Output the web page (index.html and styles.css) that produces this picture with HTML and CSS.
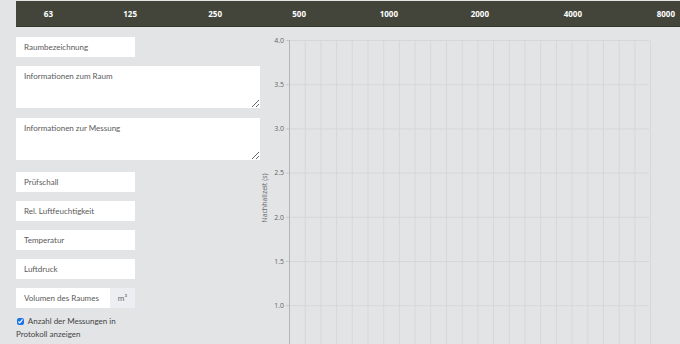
FILE: index.html
```html
<!DOCTYPE html>
<html lang="de">
<head>
    <meta charset="UTF-8">
    <meta name="viewport" content="width=device-width, initial-scale=1.0">
    <title>Nachhallzeit</title>
    <link rel="stylesheet" href="styles.css">
</head>
<body>
    <div class="band-bar">
        <span>63</span>
        <span>125</span>
        <span>250</span>
        <span>500</span>
        <span>1000</span>
        <span>2000</span>
        <span>4000</span>
        <span>8000</span>
    </div>

    <div class="main">
        <form class="room-form">
            <input class="field field-short" type="text" placeholder="Raumbezeichnung">
            <textarea class="field field-area" placeholder="Informationen zum Raum"></textarea>
            <textarea class="field field-area" placeholder="Informationen zur Messung"></textarea>
            <input class="field field-short" type="text" placeholder="Prüfschall">
            <input class="field field-short" type="text" placeholder="Rel. Luftfeuchtigkeit">
            <input class="field field-short" type="text" placeholder="Temperatur">
            <input class="field field-short" type="text" placeholder="Luftdruck">
            <div class="input-group">
                <input class="field group-input" type="text" placeholder="Volumen des Raumes">
                <span class="addon">m³</span>
            </div>
            <label class="check">
                <input type="checkbox" checked>
                Anzahl der Messungen in Protokoll anzeigen
            </label>
        </form>

        <div class="chart">
            <svg width="420" height="317" viewBox="0 0 420 317">
                <defs>
                    <pattern id="vgrid" x="29" y="0" width="15.7" height="10" patternUnits="userSpaceOnUse">
                        <line x1="0.5" y1="0" x2="0.5" y2="10" stroke="#d6d7d9" stroke-width="1"/>
                    </pattern>
                    <pattern id="hgrid" x="0" y="13" width="10" height="44.2" patternUnits="userSpaceOnUse">
                        <line x1="0" y1="0.5" x2="10" y2="0.5" stroke="#d6d7d9" stroke-width="1"/>
                    </pattern>
                </defs>
                <rect x="29" y="13" width="362" height="304" fill="url(#vgrid)"/>
                <rect x="29" y="13" width="360" height="304" fill="url(#hgrid)"/>
                <line x1="29.5" y1="13" x2="29.5" y2="317" stroke="#b4b5b7"/>
                <g class="ticks">
                    <line x1="26" y1="13.5" x2="29" y2="13.5"/>
                    <line x1="26" y1="57.7" x2="29" y2="57.7"/>
                    <line x1="26" y1="101.9" x2="29" y2="101.9"/>
                    <line x1="26" y1="146.1" x2="29" y2="146.1"/>
                    <line x1="26" y1="190.3" x2="29" y2="190.3"/>
                    <line x1="26" y1="234.5" x2="29" y2="234.5"/>
                    <line x1="26" y1="278.7" x2="29" y2="278.7"/>
                </g>
                <g class="tick-labels">
                    <text x="24" y="16">4.0</text>
                    <text x="24" y="60">3.5</text>
                    <text x="24" y="104">3.0</text>
                    <text x="24" y="148">2.5</text>
                    <text x="24" y="193">2.0</text>
                    <text x="24" y="237">1.5</text>
                    <text x="24" y="281">1.0</text>
                </g>
                <text class="axis-title" transform="translate(7 171) rotate(-90)">Nachhallzeit (s)</text>
            </svg>
        </div>
    </div>
</body>
</html>
```

FILE: styles.css
```css
* {
    margin: 0;
    padding: 0;
    box-sizing: border-box;
}

body {
    font-family: 'Lato', 'Open Sans', sans-serif;
    background: #e3e4e6;
    overflow: hidden;
    color: #555;
    width: 680px;
    height: 344px;
}

.band-bar {
    margin: 1px 0 0 16px;
    height: 26px;
    background: #43453b;
    border-bottom: 1px solid #35372f;
    display: grid;
    grid-template-columns: 37px 84px 85px 84px 92px 91px 93px 93px;
    align-items: center;
}

.band-bar span {
    font-family: 'Open Sans', sans-serif;
    text-align: right;
    color: #fff;
    font-size: 8px;
    font-weight: bold;
}

.main {
    display: flex;
}

.room-form {
    width: 260px;
    flex-shrink: 0;
    padding: 10px 0 0 16px;
    display: flex;
    flex-direction: column;
    align-items: flex-start;
    gap: 9px;
}

.field {
    font-family: inherit;
    font-size: 8px;
    color: #555;
    background: #fff;
    border: none;
    outline: none;
    padding: 0 8px;
    height: 20px;
}

.field::placeholder {
    color: #5a5a5a;
}

.field-short {
    width: 119px;
}

.field-area {
    width: 244px;
    height: 42px;
    padding-top: 5px;
    margin-bottom: 1px;
    resize: vertical;
}

.room-form .field-area + .field-short {
    margin-top: 2px;
}

.input-group {
    display: flex;
    width: 119px;
    height: 20px;
}

.group-input {
    width: 94px;
    padding-right: 2px;
}

.addon {
    flex: 1;
    background: #eceef1;
    font-size: 8px;
    color: #666;
    display: flex;
    align-items: center;
    justify-content: center;
}

.check {
    width: 120px;
    font-size: 8px;
    line-height: 13px;
    color: #444;
    margin-top: -2px;
}

.check input {
    width: 7px;
    height: 7px;
    margin: 0 2px 0 1px;
    accent-color: #1a73e8;
    vertical-align: -0.5px;
}

.chart svg {
    display: block;
}

.ticks line {
    stroke: #c4c5c7;
}

.tick-labels text {
    font-family: 'Open Sans', sans-serif;
    font-size: 7px;
    fill: #666;
    text-anchor: end;
}

.axis-title {
    font-family: 'Open Sans', sans-serif;
    font-size: 7px;
    fill: #666;
    text-anchor: middle;
}
```
